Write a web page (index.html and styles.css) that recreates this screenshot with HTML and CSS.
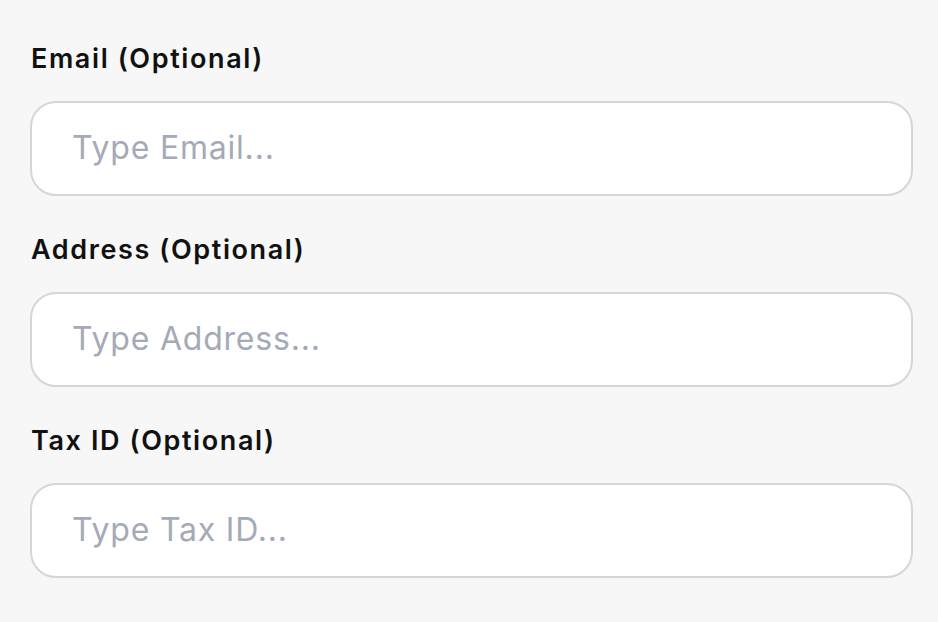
FILE: index.html
```html
<!DOCTYPE html>
<html lang="en">
<head>
<meta charset="utf-8">
<title>Form</title>
<link rel="stylesheet" href="styles.css">
</head>
<body>
<form class="form">
  <div class="field">
    <label class="label" for="email">Email (Optional)</label>
    <input class="input" id="email" type="text" placeholder="Type Email...">
  </div>
  <div class="field">
    <label class="label" for="address">Address (Optional)</label>
    <input class="input" id="address" type="text" placeholder="Type Address...">
  </div>
  <div class="field">
    <label class="label" for="tax">Tax ID (Optional)</label>
    <input class="input" id="tax" type="text" placeholder="Type Tax ID...">
  </div>
</form>
</body>
</html>
```
FILE: styles.css
```css
html, body {
  margin: 0;
  padding: 0;
  background: #f7f7f7;
}
body {
  font-family: Inter, "Noto Sans", sans-serif;
}
.form {
  display: flex;
  flex-direction: column;
  gap: 38px;
  padding: 43px 25px 0 30px;
}
.field {
  display: flex;
  flex-direction: column;
  gap: 26px;
}
.label {
  font-size: 27px;
  line-height: 32px;
  font-weight: 600;
  letter-spacing: 1.6px;
  color: #111111;
  padding-left: 1px;
}
.input {
  box-sizing: border-box;
  height: 95px;
  width: 100%;
  border: 2px solid #d6d6d6;
  border-radius: 26px;
  background: #ffffff;
  padding: 0 0 2px 40px;
  font-family: inherit;
  font-size: 32px;
  letter-spacing: 0.8px;
  color: #111;
  outline: none;
}
.input::placeholder {
  color: #a4aab8;
  opacity: 1;
}
```
